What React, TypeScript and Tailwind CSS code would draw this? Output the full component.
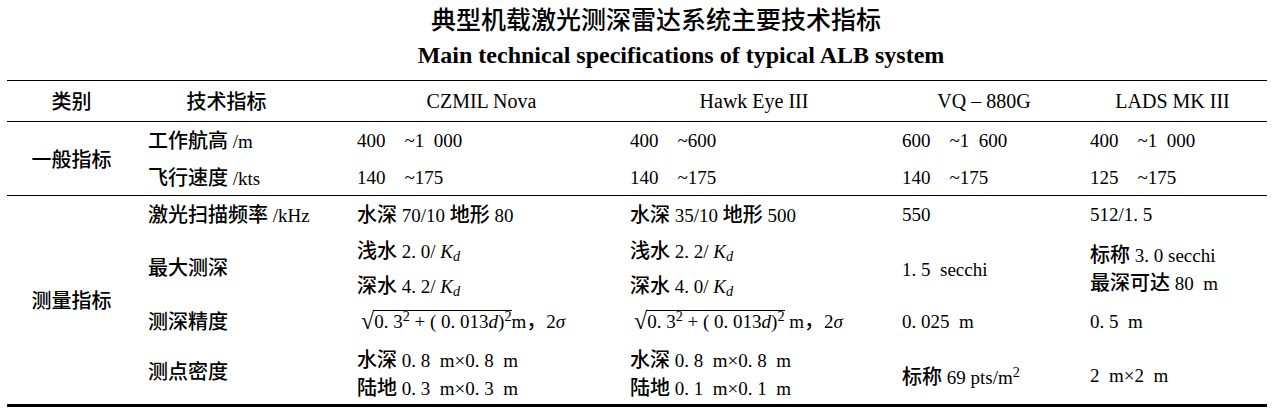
import type { ReactNode } from "react";

// Chinese run inside a Latin (serif) line
function Z({ children }: { children: ReactNode }) {
  return <span className="font-['Noto_Sans_CJK_SC',sans-serif] text-[20px] font-medium">{children}</span>;
}

function Kd() {
  return (
    <>
      <span className="italic">K</span>
      <sub className="italic">d</sub>
    </>
  );
}

function Sqrt({ gap = "" }: { gap?: string }) {
  return (
    <span className="inline-flex items-end">
      <span className="text-[24px] leading-[24px] ml-[4px] -mr-[1px]">√</span>
      <span className="border-t border-black leading-[22px] pl-[1px]">
        0. 3<sup>2</sup> + ( 0. 013<span className="italic">d</span>)<sup>2</sup>
      </span>
      <span className="leading-[22px] whitespace-pre">
        {gap}m<Z>，</Z>2<span className="italic">σ</span>
      </span>
    </span>
  );
}

type Row = { h: string; cells: ReactNode[] };

const widths = ["w-[209px]", "w-[273px]", "w-[272px]", "w-[188px]", "w-[189px]"];

const SP = "\u2003";

const general: Row[] = [
  {
    h: "h-[37px]",
    cells: [
      <><Z>工作航高</Z> /m</>,
      `400${SP}~1\u2002000`,
      `400${SP}~600`,
      `600${SP}~1\u2002600`,
      `400${SP}~1\u2002000`,
    ],
  },
  {
    h: "h-[36px]",
    cells: [
      <><Z>飞行速度</Z> /kts</>,
      `140${SP}~175`,
      `140${SP}~175`,
      `140${SP}~175`,
      `125${SP}~175`,
    ],
  },
];

function Lines({ h, pt = "", items }: { h: string; pt?: string; items: ReactNode[] }) {
  return (
    <div className={`flex flex-col ${pt}`}>
      {items.map((it, i) => (
        <div key={i} className={`${h} flex items-center`}>
          <span>{it}</span>
        </div>
      ))}
    </div>
  );
}

const survey: Row[] = [
  {
    h: "h-[36px]",
    cells: [
      <><Z>激光扫描频率</Z> /kHz</>,
      <><Z>水深</Z> 70/10 <Z>地形</Z> 80</>,
      <><Z>水深</Z> 35/10 <Z>地形</Z> 500</>,
      "550",
      "512/1. 5",
    ],
  },
  {
    h: "h-[71px]",
    cells: [
      <Z>最大测深</Z>,
      <Lines h="h-[35px]" items={[<><Z>浅水</Z> 2. 0/ <Kd /></>, <><Z>深水</Z> 4. 2/ <Kd /></>]} />,
      <Lines h="h-[35px]" items={[<><Z>浅水</Z> 2. 2/ <Kd /></>, <><Z>深水</Z> 4. 0/ <Kd /></>]} />,
      <span className="relative top-[2px]">1. 5 &nbsp;secchi</span>,
      <Lines
        h="h-[28px]"
        pt="pt-[2px]"
        items={[<><Z>标称</Z> 3. 0 secchi</>, <><Z>最深可达</Z> 80 &nbsp;m</>]}
      />,
    ],
  },
  {
    h: "h-[36px]",
    cells: [
      <Z>测深精度</Z>,
      <Sqrt />,
      <Sqrt gap={"\u00a0"} />,
      "0. 025 \u00a0m",
      "0. 5 \u00a0m",
    ],
  },
  {
    h: "h-[65px]",
    cells: [
      <Z>测点密度</Z>,
      <Lines
        h="h-[28px]"
        pt="pt-[3px]"
        items={[<><Z>水深</Z> 0. 8 &nbsp;m×0. 8 &nbsp;m</>, <><Z>陆地</Z> 0. 3 &nbsp;m×0. 3 &nbsp;m</>]}
      />,
      <Lines
        h="h-[28px]"
        pt="pt-[3px]"
        items={[<><Z>水深</Z> 0. 8 &nbsp;m×0. 8 &nbsp;m</>, <><Z>陆地</Z> 0. 1 &nbsp;m×0. 1 &nbsp;m</>]}
      />,
      <span className="relative top-[5px]"><Z>标称</Z> 69 pts/m<sup>2</sup></span>,
      <span className="relative top-[4px]">2 &nbsp;m×2 &nbsp;m</span>,
    ],
  },
];

function Group({ label, rows, last }: { label: string; rows: Row[]; last?: boolean }) {
  return (
    <div className={`flex ${last ? "border-b-[3px]" : "border-b"} border-black`}>
      <div className="w-[129px] flex items-center justify-center">
        <Z>{label}</Z>
      </div>
      <div className="flex flex-col">
        {rows.map((r, i) => (
          <div key={i} className={`flex ${r.h}`}>
            {r.cells.map((c, j) => (
              <div key={j} className={`${widths[j]} pl-3 flex items-center whitespace-nowrap`}>
                <div>{c}</div>
              </div>
            ))}
          </div>
        ))}
      </div>
    </div>
  );
}

export default function App() {
  return (
    <div className="w-[1276px] h-[415px] bg-white text-black font-['Liberation_Serif','Noto_Sans_CJK_SC',serif] text-[19px] leading-none">
      <div className="h-[37px] flex items-center justify-center pl-[36px]">
        <span className="font-['Noto_Sans_CJK_SC',sans-serif] text-[25px] font-medium">
          典型机载激光测深雷达系统主要技术指标
        </span>
      </div>
      <div className="h-[36px] flex items-center justify-center pl-[86px]">
        <span className="text-[24px] font-bold">Main technical specifications of typical ALB system</span>
      </div>
      <div className="ml-[7px] mt-[7px] w-[1260px] border-t border-black">
        <div className="flex h-[41px] border-b border-black items-center text-[20px]">
          <div className="w-[129px] text-center"><Z>类别</Z></div>
          <div className="w-[209px] text-center pr-[28px]"><Z>技术指标</Z></div>
          <div className="w-[273px] text-center">CZMIL Nova</div>
          <div className="w-[272px] text-center">Hawk Eye III</div>
          <div className="w-[188px] text-center">VQ – 880G</div>
          <div className="w-[189px] text-center">LADS MK III</div>
        </div>
        <Group label="一般指标" rows={general} />
        <Group label="测量指标" rows={survey} last />
      </div>
    </div>
  );
}
